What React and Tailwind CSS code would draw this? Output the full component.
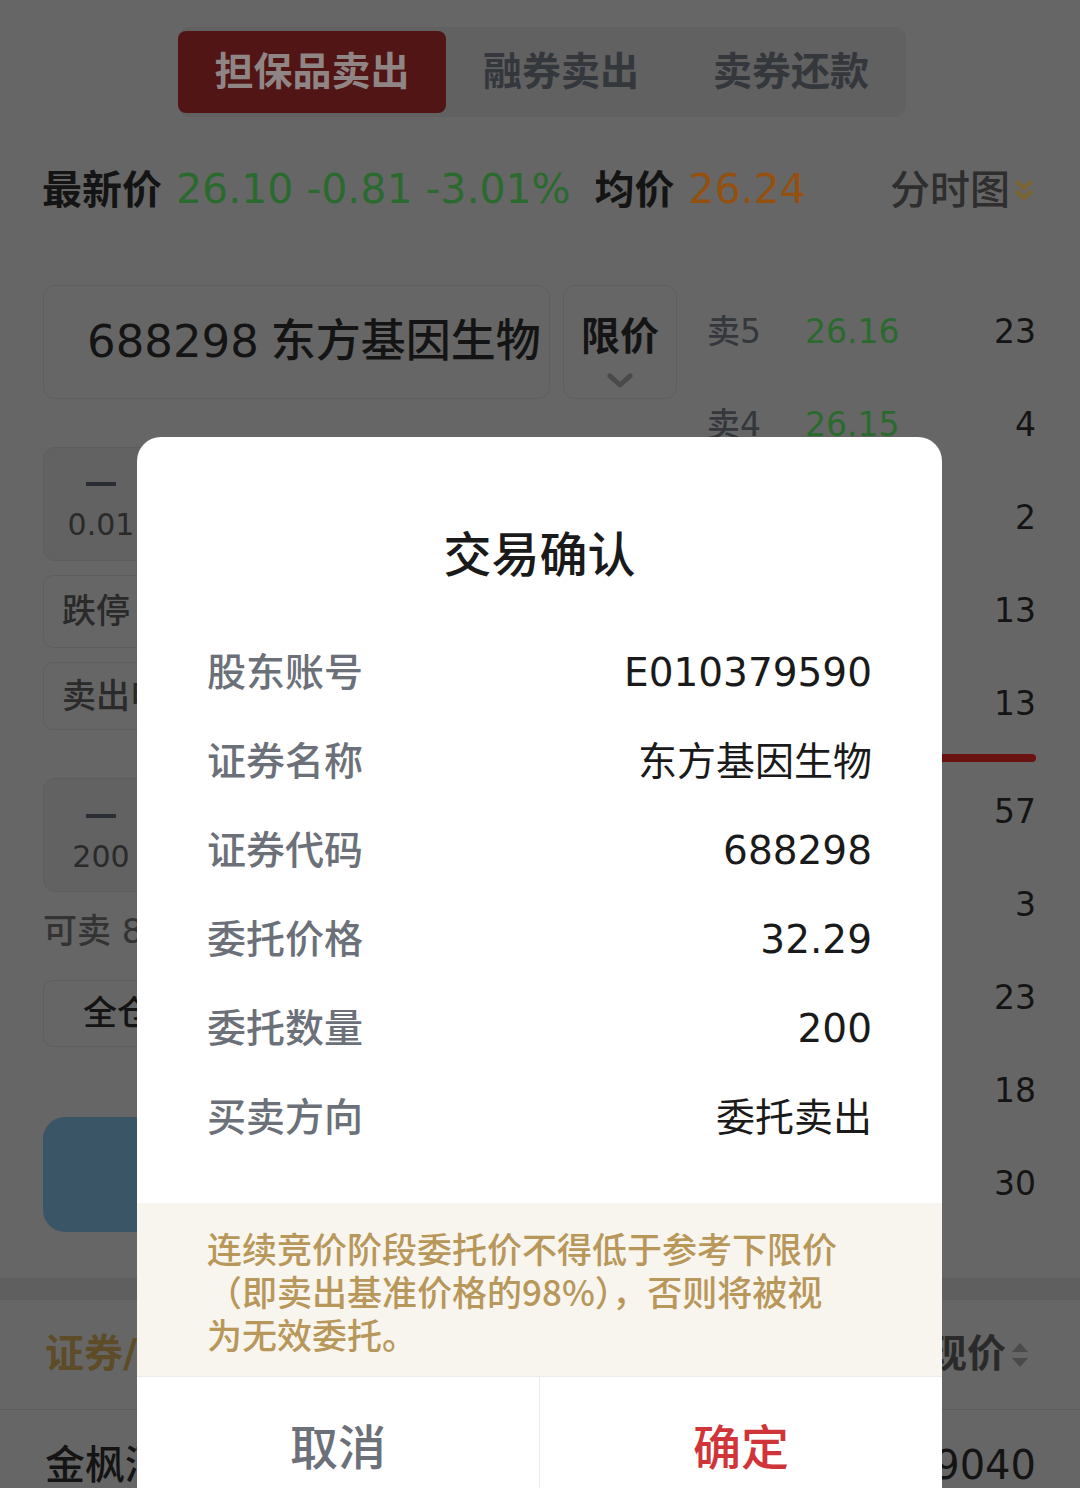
import React from 'react'

const sells = [
  ['卖5', '26.16', '23'],
  ['卖4', '26.15', '4'],
  ['卖3', '26.14', '2'],
  ['卖2', '26.13', '13'],
  ['卖1', '26.12', '13'],
]
const buys = [
  ['买1', '26.10', '57'],
  ['买2', '26.09', '3'],
  ['买3', '26.08', '23'],
  ['买4', '26.07', '18'],
  ['买5', '26.06', '30'],
]

const rows = [
  ['股东账号', 'E010379590'],
  ['证券名称', '东方基因生物'],
  ['证券代码', '688298'],
  ['委托价格', '32.29'],
  ['委托数量', '200'],
  ['买卖方向', '委托卖出'],
]

function BookRow({ row }) {
  return (
    <div className="flex h-[93px] items-center text-[33px]">
      <span className="w-[98px] font-medium text-[#34373c]">{row[0]}</span>
      <span className="text-[#2b6a2f]">{row[1]}</span>
      <span className="ml-auto text-[#141414]">{row[2]}</span>
    </div>
  )
}

function Stepper({ value, top }) {
  return (
    <div className="flex h-[114px] rounded-[12px] border border-[#5e5e5e] bg-[#626262]">
      <div className={`flex w-[114px] flex-col items-center ${top}`}>
        <div className="h-[4px] w-[30px] bg-[#2a2d33]" />
        <div className="mt-[24px] text-[30px] leading-[30px] text-[#2a2a2a]">{value}</div>
      </div>
      <div className="flex flex-1 items-center justify-center text-[40px] text-[#141414]">{value}</div>
      <div className="flex w-[114px] items-center justify-center text-[40px] text-[#2a2d33]">+</div>
    </div>
  )
}

export default function App() {
  return (
    <div className="relative h-[1488px] w-[1080px] overflow-hidden bg-[#666666] font-['DejaVu_Sans','Noto_Sans_CJK_SC',sans-serif]">
      {/* tabs */}
      <div className="pt-[27px]">
        <div className="ml-[178px] flex h-[90px] w-[728px] items-center rounded-[12px] bg-[#616161]">
          <div className="flex h-[82px] w-[268px] items-center justify-center rounded-[8px] bg-[#521515] text-[39px] font-semibold text-[#8f8585]">
            担保品卖出
          </div>
          <div className="flex flex-1 justify-center text-[39px] font-semibold text-[#34373c]">融券卖出</div>
          <div className="flex flex-1 justify-center text-[39px] font-semibold text-[#34373c]">卖券还款</div>
        </div>
      </div>

      {/* price line */}
      <div className="mt-[43px] flex h-[60px] items-center pl-[42px] pr-[45px] text-[40px]">
        <span className="font-semibold text-[#141414]">最新价</span>
        <span className="ml-[14px] text-[41px] text-[#2b6a2f]">26.10 -0.81 -3.01%</span>
        <span className="ml-[24px] font-semibold text-[#141414]">均价</span>
        <span className="ml-[14px] text-[41px] text-[#94500f]">26.24</span>
        <span className="ml-auto font-medium text-[#2e2e2e]">分时图</span>
        <svg width="22" height="28" viewBox="0 0 22 28" className="ml-[3px]">
          <polyline points="3,5 11,12 19,5" fill="none" stroke="#7a6530" strokeWidth="4" />
          <polyline points="3,15 11,22 19,15" fill="none" stroke="#7a6530" strokeWidth="4" />
        </svg>
      </div>

      {/* main */}
      <div className="mt-[65px] flex pl-[43px] pr-[44px] pb-[46px]">
        <div className="w-[634px]">
          <div className="flex gap-[13px]">
            <div className="flex h-[114px] w-[507px] items-center rounded-[12px] border border-[#5e5e5e] pl-[43px] text-[45px] text-[#141414]">
              <span>688298</span>
              <span className="ml-[12px] font-medium">东方基因生物</span>
            </div>
            <div className="flex h-[114px] w-[114px] flex-col items-center rounded-[12px] border border-[#5e5e5e] pt-[31px]">
              <span className="text-[39px] font-semibold leading-[39px] text-[#141414]">限价</span>
              <svg width="26" height="16" viewBox="0 0 26 16" className="mt-[17px]">
                <polyline points="3,3 13,12 23,3" fill="none" stroke="#4a4a4a" strokeWidth="5" strokeLinecap="round" strokeLinejoin="round" />
              </svg>
            </div>
          </div>

          <div className="mt-[48px]">
            <Stepper value="0.01" top="pt-[34px]" />
          </div>

          <div className="mt-[14px] grid h-[73px] grid-cols-3 gap-[14px]">
            <div className="flex items-center rounded-[10px] border border-[#5e5e5e] pl-[18px] text-[34px] font-medium text-[#2a2a2a]">跌停</div>
            <div className="flex items-center justify-center rounded-[10px] border border-[#5e5e5e] text-[34px] font-medium text-[#2a2a2a]">现价</div>
            <div className="flex items-center justify-center rounded-[10px] border border-[#5e5e5e] text-[34px] font-medium text-[#2a2a2a]">涨停</div>
          </div>

          <div className="mt-[14px] flex h-[68px] items-center rounded-[10px] border border-[#5e5e5e] pl-[18px] text-[34px] font-medium text-[#2a2a2a]">
            卖出申报价格
          </div>

          <div className="mt-[48px]">
            <Stepper value="200" top="pt-[35px]" />
          </div>

          <div className="mt-[14px] text-[34px] font-medium text-[#333333]">可卖 800</div>

          <div className="mt-[23px] grid h-[67px] grid-cols-4 gap-[14px]">
            {['全仓', '1/2', '1/3', '1/4'].map((t) => (
              <div key={t} className="flex items-center justify-center rounded-[10px] border border-[#5e5e5e] text-[34px] font-medium text-[#141414]">
                {t}
              </div>
            ))}
          </div>

          <div className="mt-[70px] flex h-[115px] items-center justify-center rounded-[22px] bg-[#3a5566] text-[40px] text-[#666666]">
            卖出
          </div>
        </div>

        <div className="ml-[30px] flex-1">
          {sells.map((r) => (
            <BookRow key={r[0]} row={r} />
          ))}
          <div className="mt-[4px] h-[8px] rounded-full bg-[#6a1212]" />
          <div className="mt-[3px]">
            {buys.map((r) => (
              <BookRow key={r[0]} row={r} />
            ))}
          </div>
        </div>
      </div>

      {/* positions */}
      <div className="h-[22px] bg-[#5f5f5f]" />
      <div className="flex h-[110px] items-center border-b border-[#5c5c5c] pl-[45px] pr-[50px] text-[39px]">
        <span className="font-semibold text-[#5e4c28]">证券/市值</span>
        <span className="ml-auto font-semibold text-[#2a2a2a]">现价</span>
        <svg width="20" height="30" viewBox="0 0 20 30" className="ml-[4px]">
          <polygon points="10,3 18,12 2,12" fill="#4a4a4a" />
          <polygon points="10,27 18,18 2,18" fill="#4a4a4a" />
        </svg>
      </div>
      <div className="flex h-[110px] items-center pl-[45px] pr-[44px] text-[40px] text-[#141414]">
        <span className="font-medium">金枫酒业</span>
        <span className="ml-auto">5.9040</span>
      </div>

      {/* confirm dialog */}
      <div className="absolute left-[137px] top-[437px] w-[805px] overflow-hidden rounded-t-[24px] bg-white">
        <div className="pt-[88px] text-center text-[48px] font-medium leading-[60px] text-[#1a1a1a]">交易确认</div>
        <div className="mt-[44px] mb-[40px] px-[70px]">
          {rows.map(([k, v]) => (
            <div key={k} className="flex h-[89px] items-center text-[39px]">
              <span className="font-medium text-[#6b7079]">{k}</span>
              <span className="ml-auto text-[#1a1a1a]">{v}</span>
            </div>
          ))}
        </div>
        <div className="bg-[#f8f5ef] px-[70px] pt-[23px] pb-[21px] font-['Noto_Sans_CJK_SC',sans-serif] text-[35px] font-medium leading-[43px] text-[#b8975a]">
          连续竞价阶段委托价不得低于参考下限价
          <br />
          （即卖出基准价格的98%），否则将被视
          <br />
          为无效委托。
        </div>
        <div className="grid h-[142px] grid-cols-[402px_1fr] border-t border-[#ececec] text-[48px] font-medium">
          <div className="flex items-center justify-center text-[#6b7079]">取消</div>
          <div className="flex items-center justify-center border-l border-[#ececec] text-[#d13438]">确定</div>
        </div>
      </div>
    </div>
  )
}
